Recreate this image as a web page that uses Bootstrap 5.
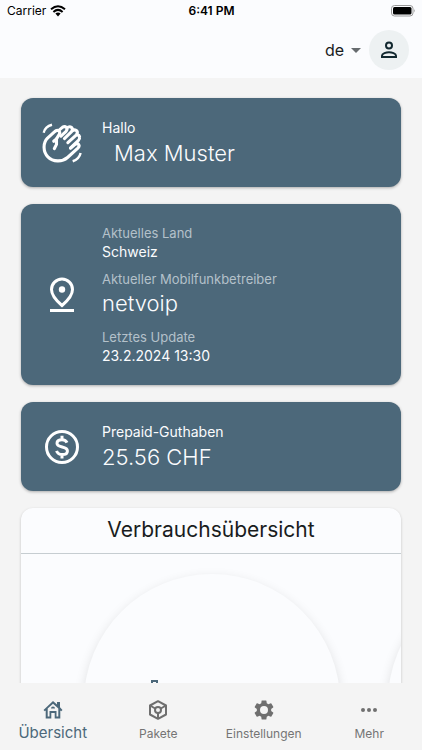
<!DOCTYPE html>
<html lang="de">
<head>
<meta charset="utf-8">
<meta name="viewport" content="width=device-width, initial-scale=1">
<title>Übersicht</title>
<link href="https://cdn.jsdelivr.net/npm/bootstrap@5.3.0/dist/css/bootstrap.min.css" rel="stylesheet">
<style>
body{font-family:Inter,"Liberation Sans",sans-serif;background:#f4f4f4;color:#191c1d}
.topbar{background:#fbfcfe}
.status{height:22px;font-size:12px;color:#000;padding:0 6px 0 7px}
.status svg{display:block}
.tools{height:56px;padding:0 13px 0 0}
.lang-select{appearance:none;border:0;background:transparent;font-size:16px;line-height:24px;color:#191c1d;width:36px;padding:0 12px 0 0}
.lang-wrap svg{right:0;top:10px;pointer-events:none}
.avatar{width:40px;height:40px;background:#edf1f2;border:0}
.scroller{padding:20px 21px 0;scrollbar-width:none}
.scroller::-webkit-scrollbar{display:none}
.stack{gap:17px}
.tile{background:#4c687a;color:#fbfcfe;border-radius:12px;box-shadow:0 1px 3px rgba(0,0,0,.3);min-height:89px}
.tile-tall{min-height:181px}
.tile-icon{width:81px}
.t-label{font-size:14px;line-height:20px}
.t-dim{font-size:13px;line-height:18px;color:#b4c1ca}
.t-value{font-size:22px;line-height:30px;font-weight:300}
dd.t-value{margin-bottom:10px}
.usage{background:#fbfcfe;border-radius:12px;box-shadow:0 1px 3px rgba(0,0,0,.2)}
.usage h2{font-size:21px;line-height:28px;padding:8px 0 9px;border-bottom:1px solid #c6cdd1;font-weight:400}
.rings{gap:48px;padding:20px 63px 24px}
.ring{width:256px;height:256px;background:#fbfcfe;box-shadow:0 4px 12px rgba(0,0,0,.12);padding:104px 62px}
.tabs{height:67px;padding-top:5px}
.tab{color:#747474;font-size:12px;line-height:16px;padding-top:12px}
.tab svg{margin-bottom:6px}
.tab.active{color:#4c687a;font-size:15px}
.tab.active svg{margin-bottom:5px}
</style>
<script src="https://cdn.jsdelivr.net/npm/bootstrap@5.3.0/dist/js/bootstrap.bundle.min.js"></script>
</head>
<body class="vh-100 d-flex flex-column overflow-hidden">
<header class="topbar flex-shrink-0">
  <div class="status d-flex align-items-center">
    <div class="col d-flex align-items-center gap-1">Carrier
      <svg width="16" height="12" viewBox="0 0 16 12" fill="none" stroke="#000" stroke-width="2"><path d="M1 4.3Q8-1.9 15 4.3M3.4 6.9Q8 2.900 12.600 6.900"/><path d="M5.400 8.600Q8 6.500 10.600 8.600L8 11.400Z" fill="#000" stroke="none"/></svg>
    </div>
    <div class="fw-semibold">6:41 PM</div>
    <div class="col d-flex justify-content-end">
      <svg width="25" height="12" viewBox="0 0 25 12"><rect x=".5" y=".5" width="21.5" height="10.5" rx="3" fill="none" stroke="#999"/><rect x="2" y="2" width="18.5" height="7.5" rx="1.5"/><path d="M23.2 4q1.6 1.8 0 3.6Z" fill="#999"/></svg>
    </div>
  </div>
  <div class="tools d-flex align-items-center justify-content-end gap-2">
    <div class="lang-wrap position-relative">
      <select class="lang-select" aria-label="Sprache"><option>de</option><option>en</option><option>fr</option></select>
      <svg class="position-absolute" width="10" height="5" viewBox="0 0 10 5"><path d="M0 0h10L5 5Z" fill="#666b6e"/></svg>
    </div>
    <button class="avatar rounded-circle d-flex align-items-center justify-content-center p-0" type="button" aria-label="Profil">
      <svg width="24" height="24" viewBox="0 0 24 24" fill="none" stroke="#12282f" stroke-width="2"><circle cx="12" cy="7.500" r="3"/><path d="M5 19v-1.200C5 15.600 9.300 14.200 12 14.200s7 1.400 7 3.600V19Z"/></svg>
    </button>
  </div>
</header>

<main class="scroller flex-grow-1 overflow-auto">
  <div class="stack d-flex flex-column">
    <section class="tile d-flex align-items-center">
      <div class="tile-icon d-flex justify-content-center flex-shrink-0">
        <svg width="40" height="40" viewBox="20 24 116 116" fill="none" stroke="#fff" stroke-width="9" stroke-linecap="round" stroke-linejoin="round">
          <path d="M56 98L62 86V70L70 57Q74 49 67 46Q62 44 56 50L36 68C22 82 23 108 37 122C52 137 78 138 94 124L124 97Q130 91 126 86Q122 82 116 86L103 97"/>
          <path d="M62 70L54 77M68 46L80 36Q86 32 91 37Q95 43 89 49L75 62M92 39Q99 32 106 37Q111 43 105 50L85 69M108 47Q115 41 121 47Q125 53 119 59L95 81M121 59Q128 58 129 65Q130 70 125 75L103 96"/>
          <path d="M25 52Q29 34 49 29M132 111Q128 129 109 135" stroke-width="7" stroke-linecap="butt"/>
        </svg>
      </div>
      <div><div class="t-label">Hallo</div><div class="t-value ms-2 ps-1">Max Muster</div></div>
    </section>

    <section class="tile tile-tall d-flex align-items-center">
      <div class="tile-icon d-flex justify-content-center flex-shrink-0">
        <svg width="40" height="40" viewBox="0 0 40 40" fill="none" stroke="#fff" stroke-width="3"><path d="M20 30.500C13.500 25 9.500 20 9.500 14.500a10.500 10.500 0 0 1 21 0C30.500 20 26.500 25 20 30.500Z"/><circle cx="20" cy="14.500" r="3.200" fill="#fff" stroke="none"/><path d="M8 35.500h24"/></svg>
      </div>
      <dl class="mb-0">
        <dt class="t-dim fw-normal">Aktuelles Land</dt><dd class="t-label mb-2">Schweiz</dd>
        <dt class="t-dim fw-normal">Aktueller Mobilfunkbetreiber</dt><dd class="t-value">netvoip</dd>
        <dt class="t-dim fw-normal">Letztes Update</dt><dd class="t-label mb-0">23.2.2024 13:30</dd>
      </dl>
    </section>

    <section class="tile d-flex align-items-center">
      <div class="tile-icon d-flex justify-content-center flex-shrink-0">
        <svg width="40" height="40" viewBox="0 0 40 40" fill="none" stroke="#fff" stroke-width="3"><circle cx="20" cy="20" r="15.500"/><path d="M25 15.600C24 13.300 22.300 12.700 20 12.700c-3 0-5 1.300-5 3.500 0 5.200 10.400 2.400 10.400 7.700 0 2.400-2.200 3.700-5.200 3.700-3 0-4.800-1.200-5.600-3.700M20 8.800v4M20 27.500v4"/></svg>
      </div>
      <div><div class="t-label">Prepaid-Guthaben</div><div class="t-value">25.56 CHF</div></div>
    </section>

    <section class="usage overflow-hidden">
      <h2 class="text-center mb-0">Verbrauchsübersicht</h2>
      <div class="rings d-flex overflow-hidden">
        <div class="ring rounded-circle flex-shrink-0"><svg class="d-block" width="18" height="24" viewBox="0 0 18 24" fill="none" stroke="#4c687a" stroke-width="2"><path d="M6 6V3h5v3M4 7h9v15H4Z"/></svg></div>
        <div class="ring rounded-circle flex-shrink-0"></div>
      </div>
    </section>
  </div>
</main>

<nav class="tabs d-flex flex-shrink-0" aria-label="Hauptnavigation">
  <a class="tab active col d-flex flex-column align-items-center text-decoration-none" aria-current="page" href="#uebersicht">
    <svg width="20" height="20" viewBox="0 0 20 20" fill="#4c687a" fill-rule="evenodd"><path d="M10 1l4 3.600V2h3v5.300L19.500 10l-1.300 1.300-.9-.8V18.500h-5.600v-5.500H8.300v5.500H2.700v-8l-.9.8L.5 10ZM4.700 8.500v8h1.800V11h7v5.500h1.800v-8L10 3.700ZM8 8.500a2 2 0 0 1 4 0Z"/></svg>Übersicht</a>
  <a class="tab col d-flex flex-column align-items-center text-decoration-none" href="#pakete">
    <svg width="20" height="20" viewBox="0 0 20 20" fill="none" stroke="#6f6f6f" stroke-width="2" stroke-linejoin="round"><path d="M10 1.200L18 5.500v9L10 18.800 2 14.500v-9ZM2 5.500l5.200 3M18 5.500l-5.200 3M10 13v5.800"/><circle cx="10" cy="10" r="3"/></svg>Pakete</a>
  <a class="tab col d-flex flex-column align-items-center text-decoration-none" href="#einstellungen">
    <svg width="20" height="20" viewBox="2 2 20 20" fill="#6f6f6f"><path d="M19.140 12.940c.04-.3.060-.61.060-.94 0-.32-.02-.64-.07-.94l2.030-1.580a.49.49 0 0 0 .12-.61l-1.920-3.320a.488.488 0 0 0-.59-.22l-2.390.96c-.5-.38-1.030-.7-1.620-.94l-.36-2.540a.484.484 0 0 0-.48-.41h-3.840c-.24 0-.43.17-.47.41l-.36 2.540c-.59.24-1.130.57-1.620.94l-2.390-.96c-.22-.08-.47 0-.59.22L2.740 8.870c-.12.21-.08.47.12.61l2.030 1.580c-.05.3-.09.63-.09.94s.02.64.07.94l-2.030 1.580a.49.49 0 0 0-.12.61l1.920 3.320c.12.22.37.29.59.22l2.390-.96c.5.38 1.030.7 1.620.94l.36 2.540c.05.24.24.41.48.41h3.840c.24 0 .44-.17.47-.41l.36-2.540c.59-.24 1.130-.56 1.620-.94l2.390.96c.22.08.47 0 .59-.22l1.920-3.320c.12-.22.070-.47-.12-.61l-2.010-1.580ZM12 16a4 4 0 1 1 0-8 4 4 0 0 1 0 8Z"/></svg>Einstellungen</a>
  <a class="tab col d-flex flex-column align-items-center text-decoration-none" href="#mehr">
    <svg width="20" height="20" viewBox="0 0 20 20" fill="#6f6f6f"><circle cx="4" cy="10" r="2"/><circle cx="10" cy="10" r="2"/><circle cx="16" cy="10" r="2"/></svg>Mehr</a>
</nav>
</body>
</html>
